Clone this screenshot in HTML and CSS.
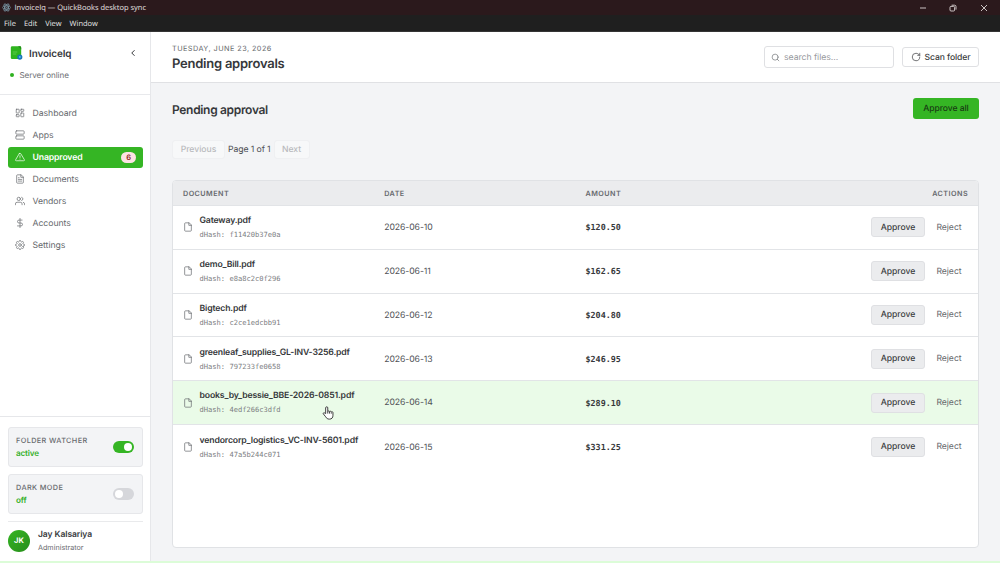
FILE: index.html
```
<!DOCTYPE html>
<html lang="en">
<head>
    <meta charset="UTF-8">
    <meta name="viewport" content="width=device-width, initial-scale=1.0">
    <title>InvoiceIq — QuickBooks desktop sync</title>
    <link rel="stylesheet" href="styles.css">
</head>
<body>
    <!-- icons shared by several places -->
    <svg class="sprite">
        <symbol id="file" viewBox="0 0 24 24"><path d="M14 2H6a2 2 0 0 0-2 2v16a2 2 0 0 0 2 2h12a2 2 0 0 0 2-2V8z"/><path d="M14 2v6h6"/></symbol>
    </svg>

    <div class="titlebar">
        <svg class="app-icon" viewBox="0 0 24 24"><ellipse cx="12" cy="12" rx="11" ry="4.5"/><ellipse cx="12" cy="12" rx="11" ry="4.5" transform="rotate(60 12 12)"/><ellipse cx="12" cy="12" rx="11" ry="4.5" transform="rotate(120 12 12)"/><circle cx="12" cy="12" r="1"/></svg>
        <span class="window-title">InvoiceIq — QuickBooks desktop sync</span>
        <div class="window-buttons">
            <svg viewBox="0 0 8 8"><path d="M1 4h6"/></svg>
            <svg viewBox="0 0 8 8"><rect x="1" y="2.4" width="4.6" height="4.6" rx="1"/><path d="M2.6 1.2h3a1.4 1.4 0 0 1 1.4 1.4v3"/></svg>
            <svg viewBox="0 0 8 8"><path d="M1 1l6 6M7 1L1 7"/></svg>
        </div>
    </div>
    <div class="menubar">
        <span>File</span>
        <span>Edit</span>
        <span>View</span>
        <span>Window</span>
    </div>

    <div class="app">
        <aside class="sidebar">
            <div class="brand">
                <div class="brand-row">
                    <svg class="logo" viewBox="0 0 12 14"><rect x="0.3" y="0.3" width="10.4" height="12.8" rx="1.4" fill="#2eb41f"/><path d="M7.5 0.3h1.8a1.4 1.4 0 0 1 1.4 1.4v1.8z" fill="#208f18"/><path d="M2.2 6h4.6M2.2 8h3.6" stroke="#6fd262" stroke-width="0.7"/><circle cx="9.3" cy="11.1" r="2.6" fill="#1976b8"/><circle cx="9.3" cy="11.1" r="1" fill="#58b9ed"/></svg>
                    <h1>InvoiceIq</h1>
                    <svg class="icon collapse" viewBox="0 0 24 24"><path d="M15 18l-6-6 6-6"/></svg>
                </div>
                <div class="status"><span class="dot"></span>Server online</div>
            </div>

            <nav class="nav-links">
                <a>
                    <svg class="icon" viewBox="0 0 24 24"><rect x="3" y="3" width="7" height="9" rx="1"/><rect x="14" y="3" width="7" height="5" rx="1"/><rect x="14" y="12" width="7" height="9" rx="1"/><rect x="3" y="16" width="7" height="5" rx="1"/></svg>
                    <span>Dashboard</span>
                </a>
                <a>
                    <svg class="icon" viewBox="0 0 24 24"><rect x="2" y="2" width="20" height="8" rx="2"/><rect x="2" y="14" width="20" height="8" rx="2"/></svg>
                    <span>Apps</span>
                </a>
                <a class="active">
                    <svg class="icon" viewBox="0 0 24 24"><path d="M10.3 3.9L1.8 18a2 2 0 0 0 1.7 3h17a2 2 0 0 0 1.7-3L13.7 3.9a2 2 0 0 0-3.4 0z"/><path d="M12 9v4M12 17h.01"/></svg>
                    <span>Unapproved</span>
                    <b class="badge">6</b>
                </a>
                <a>
                    <svg class="icon" viewBox="0 0 24 24"><path d="M14 2H6a2 2 0 0 0-2 2v16a2 2 0 0 0 2 2h12a2 2 0 0 0 2-2V8z"/><path d="M14 2v6h6M16 13H8M16 17H8M10 9H8"/></svg>
                    <span>Documents</span>
                </a>
                <a>
                    <svg class="icon" viewBox="0 0 24 24"><path d="M17 21v-2a4 4 0 0 0-4-4H5a4 4 0 0 0-4 4v2"/><circle cx="9" cy="7" r="4"/><path d="M23 21v-2a4 4 0 0 0-3-3.87M16 3.13a4 4 0 0 1 0 7.75"/></svg>
                    <span>Vendors</span>
                </a>
                <a>
                    <svg class="icon" viewBox="0 0 24 24"><path d="M12 1v22M17 5H9.5a3.5 3.5 0 0 0 0 7h5a3.5 3.5 0 0 1 0 7H6"/></svg>
                    <span>Accounts</span>
                </a>
                <a>
                    <svg class="icon" viewBox="0 0 24 24"><circle cx="12" cy="12" r="3.2"/><path d="M19.4 15a1.65 1.65 0 0 0 .33 1.82l.06.06a2 2 0 1 1-2.83 2.83l-.06-.06a1.65 1.65 0 0 0-2.8 1.17V21a2 2 0 0 1-4 0v-.09a1.65 1.65 0 0 0-2.9-1.2l-.06.06a2 2 0 1 1-2.83-2.83l.06-.06A1.65 1.65 0 0 0 3.09 14H3a2 2 0 0 1 0-4h.09a1.65 1.65 0 0 0 1.2-2.9l-.06-.06a2 2 0 1 1 2.83-2.83l.06.06A1.65 1.65 0 0 0 10 3.09V3a2 2 0 0 1 4 0v.09a1.65 1.65 0 0 0 2.82 1.18l.06-.06a2 2 0 1 1 2.83 2.83l-.06.06A1.65 1.65 0 0 0 20.91 10H21a2 2 0 0 1 0 4h-.09a1.65 1.65 0 0 0-1.51 1z"/></svg>
                    <span>Settings</span>
                </a>
            </nav>

            <div class="sidebar-footer">
                <div class="toggle-card">
                    <div>
                        <h4>FOLDER WATCHER</h4>
                        <p>active</p>
                    </div>
                    <span class="switch on"></span>
                </div>
                <div class="toggle-card">
                    <div>
                        <h4>DARK MODE</h4>
                        <p>off</p>
                    </div>
                    <span class="switch"></span>
                </div>
                <div class="user">
                    <div class="avatar">JK</div>
                    <div>
                        <h4>Jay Kalsariya</h4>
                        <p>Administrator</p>
                    </div>
                </div>
            </div>
        </aside>

        <main class="main">
            <header class="header">
                <div class="heading">
                    <p>TUESDAY, JUNE 23, 2026</p>
                    <h2>Pending approvals</h2>
                </div>
                <div class="search">
                    <svg class="icon" viewBox="0 0 24 24"><circle cx="11" cy="11" r="8"/><path d="M21 21l-4.35-4.35"/></svg>
                    <span>search files...</span>
                </div>
                <button class="scan">
                    <svg class="icon" viewBox="0 0 24 24"><path d="M21 12a9 9 0 1 1-9-9c2.52 0 4.93 1 6.74 2.74L21 8"/><path d="M21 3v5h-5"/></svg>
                    <span>Scan folder</span>
                </button>
            </header>

            <section class="content">
                <div class="section-head">
                    <h2>Pending approval</h2>
                    <button class="approve-all">Approve all</button>
                </div>
                <div class="pager">
                    <button class="prev">Previous</button>
                    <span>Page 1 of 1</span>
                    <button class="next">Next</button>
                </div>

                <div class="table">
                    <div class="row table-head">
                        <span>DOCUMENT</span>
                        <span>DATE</span>
                        <span>AMOUNT</span>
                        <span>ACTIONS</span>
                    </div>
                    <div class="row">
                        <div class="doc">
                            <svg class="icon"><use href="#file"/></svg>
                            <div><h3>Gateway.pdf</h3><p>dHash: f11420b37e0a</p></div>
                        </div>
                        <span class="date">2026-06-10</span>
                        <span class="amount">$120.50</span>
                        <div class="actions"><button class="approve">Approve</button><button class="reject">Reject</button></div>
                    </div>
                    <div class="row">
                        <div class="doc">
                            <svg class="icon"><use href="#file"/></svg>
                            <div><h3>demo_Bill.pdf</h3><p>dHash: e8a8c2c0f296</p></div>
                        </div>
                        <span class="date">2026-06-11</span>
                        <span class="amount">$162.65</span>
                        <div class="actions"><button class="approve">Approve</button><button class="reject">Reject</button></div>
                    </div>
                    <div class="row">
                        <div class="doc">
                            <svg class="icon"><use href="#file"/></svg>
                            <div><h3>Bigtech.pdf</h3><p>dHash: c2ce1edcbb91</p></div>
                        </div>
                        <span class="date">2026-06-12</span>
                        <span class="amount">$204.80</span>
                        <div class="actions"><button class="approve">Approve</button><button class="reject">Reject</button></div>
                    </div>
                    <div class="row">
                        <div class="doc">
                            <svg class="icon"><use href="#file"/></svg>
                            <div><h3>greenleaf_supplies_GL-INV-3256.pdf</h3><p>dHash: 797233fe0658</p></div>
                        </div>
                        <span class="date">2026-06-13</span>
                        <span class="amount">$246.95</span>
                        <div class="actions"><button class="approve">Approve</button><button class="reject">Reject</button></div>
                    </div>
                    <div class="row hovered">
                        <div class="doc">
                            <svg class="icon"><use href="#file"/></svg>
                            <div><h3>books_by_bessie_BBE-2026-0851.pdf</h3><p>dHash: 4edf266c3dfd</p></div>
                        </div>
                        <span class="date">2026-06-14</span>
                        <span class="amount">$289.10</span>
                        <div class="actions"><button class="approve">Approve</button><button class="reject">Reject</button></div>
                    </div>
                    <div class="row">
                        <div class="doc">
                            <svg class="icon"><use href="#file"/></svg>
                            <div><h3>vendorcorp_logistics_VC-INV-5601.pdf</h3><p>dHash: 47a5b244c071</p></div>
                        </div>
                        <span class="date">2026-06-15</span>
                        <span class="amount">$331.25</span>
                        <div class="actions"><button class="approve">Approve</button><button class="reject">Reject</button></div>
                    </div>
                </div>
            </section>
        </main>
    </div>
    <div class="bottom-strip"></div>

    <svg class="cursor" viewBox="0 0 20 24"><path d="M6 13V3.2a1.8 1.8 0 0 1 3.6 0V9.5a1.6 1.6 0 0 1 3.1.3 1.6 1.6 0 0 1 3 .7 1.5 1.5 0 0 1 2.8.8V16c0 4-2 6.5-6 6.5-3.5 0-5-1.5-6.5-4L2 13.5c-.8-1.5 1-2.6 2.2-1.5z"/><path d="M9.6 9.5V13M12.7 10v3M15.7 11v2"/></svg>
</body>
</html>
```

FILE: styles.css
```
* {
    margin: 0;
    padding: 0;
    box-sizing: border-box;
}

body {
    width: 1000px;
    height: 563px;
    overflow: hidden;
    display: flex;
    flex-direction: column;
    font-family: Inter, sans-serif;
    font-size: 8.7px;
    text-rendering: geometricPrecision;
    color: #36383b;
    background: #f3f4f6;
}

button {
    font-family: inherit;
    font-size: 8.6px;
    font-weight: 500;
    text-rendering: inherit;
    border: 1px solid transparent;
    border-radius: 3px;
    color: #3b3d40;
}

.sprite {
    position: absolute;
    width: 0;
    height: 0;
}

.icon {
    width: 10px;
    height: 10px;
    flex-shrink: 0;
    fill: none;
    stroke: currentColor;
    stroke-width: 1.7;
    stroke-linecap: round;
    stroke-linejoin: round;
}

/* window chrome */
.titlebar {
    height: 15px;
    flex-shrink: 0;
    display: flex;
    align-items: center;
    padding: 0 12.5px 0 2px;
    background: #2b191c;
    color: #e8e4e4;
    font-family: "Open Sans", sans-serif;
    font-size: 7.5px;
}

.window-title {
    padding-top: 1px;
}

.app-icon {
    width: 9px;
    height: 9px;
    margin-right: 3.5px;
    fill: none;
    stroke: #83a5b5;
    stroke-width: 1.8;
}

.window-buttons {
    margin-left: auto;
    display: flex;
    gap: 22.5px;
}

.window-buttons svg {
    width: 8px;
    height: 8px;
    fill: none;
    stroke: #dcd6d6;
    stroke-width: 0.9;
}

.menubar {
    height: 17px;
    flex-shrink: 0;
    display: flex;
    align-items: center;
    gap: 8px;
    padding: 2px 4px 0;
    background: #1f1f1f;
    border-bottom: 1px solid #353535;
    color: #e8e8e8;
    font-family: "Open Sans", sans-serif;
    font-size: 7.5px;
}

.app {
    flex: 1;
    display: flex;
    min-height: 0;
}

/* sidebar */
.sidebar {
    width: 151px;
    flex-shrink: 0;
    display: flex;
    flex-direction: column;
    background: #fff;
    border-right: 1px solid #e6e7ea;
}

.brand {
    height: 63px;
    padding: 14px 12px 0 10px;
    border-bottom: 1px solid #e8e9ec;
}

.brand-row {
    height: 14px;
    display: flex;
    align-items: center;
}

.logo {
    width: 13px;
    height: 14px;
    margin-right: 6px;
}

.brand-row h1 {
    padding-top: 1px;
    font-size: 9.9px;
    font-weight: 600;
    letter-spacing: -0.1px;
}

.collapse {
    margin-left: auto;
    stroke-width: 2.4;
}

.status {
    display: flex;
    align-items: center;
    gap: 5.5px;
    margin-top: 9px;
    font-size: 8.1px;
    line-height: 12px;
    letter-spacing: -0.1px;
    color: #6c6e72;
}

.dot {
    width: 4px;
    height: 4px;
    border-radius: 50%;
    background: #2fb120;
}

.nav-links {
    flex: 1;
    display: flex;
    flex-direction: column;
    gap: 0.5px;
    padding: 7.5px 7px 0 8px;
}

.nav-links a {
    height: 21.5px;
    display: flex;
    align-items: center;
    gap: 7.5px;
    padding: 0 7px;
    border-radius: 3px;
    letter-spacing: -0.05px;
    color: #66696d;
}

.nav-links span {
    padding-top: 1px;
}

.nav-links a.active {
    background: #35b524;
    color: #fff;
    font-weight: 600;
    letter-spacing: -0.15px;
}

.badge {
    margin-left: auto;
    width: 15px;
    height: 11px;
    border-radius: 6px;
    background: #fde3e3;
    color: #8d2424;
    font-size: 7.5px;
    font-weight: 600;
    line-height: 11px;
    text-align: center;
}

.sidebar-footer {
    height: 145px;
    padding: 10px 7px 0 8px;
    border-top: 1px solid #e6e7ea;
}

.toggle-card {
    height: 40px;
    display: flex;
    align-items: center;
    justify-content: space-between;
    padding: 0 8px 0 7px;
    margin-bottom: 7px;
    background: #f3f4f6;
    border: 1px solid #e6e7ea;
    border-radius: 3px;
}

.toggle-card h4 {
    font-size: 7.3px;
    font-weight: 500;
    line-height: 13px;
    letter-spacing: 0.38px;
    color: #66696d;
}

.toggle-card p {
    font-size: 8.1px;
    font-weight: 600;
    line-height: 13px;
    letter-spacing: -0.15px;
    color: #35b02a;
}

.switch {
    width: 21px;
    height: 12px;
    padding: 2px;
    border-radius: 6px;
    background: #d6d7db;
    display: flex;
}

.switch::before {
    content: "";
    width: 8px;
    height: 8px;
    border-radius: 50%;
    background: #fff;
}

.switch.on {
    background: #35b524;
    justify-content: flex-end;
}

.user {
    display: flex;
    align-items: center;
    gap: 8px;
    padding-top: 6px;
    border-top: 1px solid #e9eaec;
}

.avatar {
    width: 22px;
    height: 22px;
    border-radius: 50%;
    background: linear-gradient(135deg, #35b524, #278d1b);
    color: #fff;
    font-size: 7.5px;
    font-weight: 700;
    line-height: 22px;
    text-align: center;
}

.user h4 {
    padding-top: 1px;
    font-size: 8.5px;
    font-weight: 600;
    line-height: 13px;
    letter-spacing: -0.07px;
}

.user p {
    font-size: 7.2px;
    line-height: 12px;
    color: #6c6e72;
}

/* main area */
.main {
    flex: 1;
    display: flex;
    flex-direction: column;
}

.header {
    height: 51px;
    display: flex;
    align-items: center;
    padding: 0 21px;
    background: #fff;
    border-bottom: 1px solid #e0e1e4;
}

.heading {
    margin-right: auto;
    padding-top: 2px;
}

.heading p {
    font-size: 7.3px;
    line-height: 12px;
    letter-spacing: 0.44px;
    color: #66696d;
}

.heading h2 {
    font-size: 13px;
    font-weight: 600;
    line-height: 18px;
    letter-spacing: -0.24px;
}

.search {
    width: 130px;
    height: 22px;
    display: flex;
    align-items: center;
    gap: 4px;
    padding: 0 6px;
    margin-right: 8px;
    border: 1px solid #dfe0e3;
    border-radius: 3px;
    color: #989a9e;
}

.search span,
.scan span {
    padding-top: 1px;
}

.search span {
    letter-spacing: -0.05px;
}

.search .icon {
    width: 9px;
    height: 9px;
    color: #66696d;
}

.scan {
    width: 77px;
    height: 20px;
    display: flex;
    align-items: center;
    justify-content: center;
    gap: 4px;
    background: #fff;
    border-color: #dfe0e3;
    letter-spacing: -0.1px;
}

.content {
    flex: 1;
    display: flex;
    flex-direction: column;
    padding: 15px 21px 13px;
}

.section-head {
    height: 21px;
    display: flex;
    align-items: center;
    justify-content: space-between;
}

.section-head h2 {
    padding-top: 2px;
    font-size: 12px;
    font-weight: 600;
    letter-spacing: -0.32px;
}

.approve-all {
    width: 66px;
    height: 21px;
    background: #35b524;
    color: #183b13;
    letter-spacing: -0.08px;
}

.pager {
    height: 19px;
    display: flex;
    align-items: center;
    gap: 3px;
    margin-top: 21px;
    letter-spacing: -0.1px;
    color: #4d4f53;
}

.pager span {
    padding-top: 1px;
}

.pager button {
    height: 19px;
    padding-top: 1px;
    background: #f7f8f9;
    border-color: #eff0f2;
    color: #b9babd;
}

.prev {
    width: 53px;
}

.next {
    width: 36px;
}

.table {
    flex: 1;
    margin-top: 21px;
    background: #fff;
    border: 1px solid #e0e2e5;
    border-radius: 4px;
    overflow: hidden;
}

.row {
    height: 43.8px;
    display: grid;
    grid-template-columns: repeat(4, minmax(0, 1fr));
    align-items: center;
    border-bottom: 1px solid #e2e4e7;
}

.row > * {
    padding: 0 10px;
}

.row:last-child {
    border-bottom: none;
}

.table-head {
    height: 25px;
    background: #ebecee;
    font-size: 7.2px;
    font-weight: 600;
    letter-spacing: 0.45px;
    color: #66696d;
}

.table-head span:last-child {
    text-align: right;
}

.hovered {
    background: #eafbe8;
}

.doc {
    display: flex;
    align-items: center;
    gap: 7px;
    white-space: nowrap;
}

.doc .icon {
    margin-left: -0.5px;
    color: #66696d;
}

.doc h3 {
    padding-top: 1.5px;
    font-size: 8.7px;
    font-weight: 600;
    line-height: 14px;
    letter-spacing: -0.16px;
}

.doc p {
    font-family: "DejaVu Sans Mono", monospace;
    font-size: 7.1px;
    line-height: 14px;
    color: #7b7d81;
}

.row .date {
    padding-top: 1.5px;
    letter-spacing: -0.1px;
    color: #505256;
}

.amount {
    font-family: "DejaVu Sans Mono", monospace;
    font-size: 8.4px;
    font-weight: bold;
}

.actions {
    display: flex;
    justify-content: flex-end;
    gap: 3px;
}

.row .actions {
    padding-right: 8px;
}

.approve,
.reject {
    height: 20px;
    padding-top: 1px;
}

.approve {
    width: 54px;
    background: #ebecee;
    border-color: #dfe0e3;
}

.reject {
    width: 42px;
    background: none;
    color: #66696d;
    font-weight: 400;
}

.bottom-strip {
    height: 2px;
    flex-shrink: 0;
    background: #dcfcd8;
}

/* pointer over the hovered row */
.cursor {
    position: absolute;
    left: 322px;
    top: 406px;
    width: 12px;
    height: 14px;
    fill: #fff;
    stroke: #333;
    stroke-width: 1.6;
}
```
